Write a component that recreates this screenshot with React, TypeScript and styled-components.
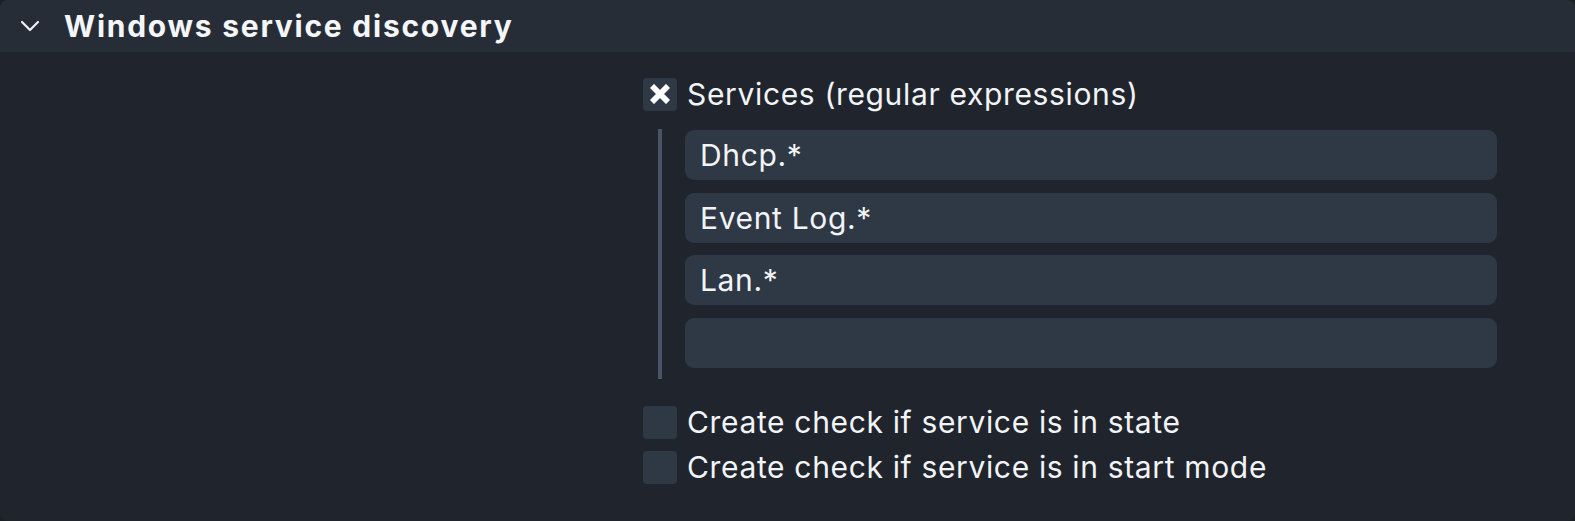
import React from "react";
import styled, { createGlobalStyle } from "styled-components";

const GlobalStyle = createGlobalStyle`
  html, body {
    margin: 0;
    padding: 0;
    background: #1b1f26;
  }
  body {
    font-family: Inter, "Noto Sans", sans-serif;
    color: #f2f4f7;
  }
`;

function Chevron() {
  return (
    <svg width="20" height="12" viewBox="0 0 20 12" fill="none">
      <path d="M2 2l8 8 8-8" stroke="#eef1f5" strokeWidth="2.2" strokeLinecap="round" strokeLinejoin="round" />
    </svg>
  );
}

function Cross() {
  return (
    <svg width="20" height="20" viewBox="0 0 20 20">
      <path d="M4 4l12 12M16 4L4 16" stroke="#ffffff" strokeWidth="5.8" strokeLinecap="square" />
    </svg>
  );
}

const services = ["Dhcp.*", "Event Log.*", "Lan.*", ""];

export default function App() {
  return (
    <>
      <GlobalStyle />
      <Panel>
        <Header>
          <Chevron />
          <Title>Windows service discovery</Title>
        </Header>
        <Body>
          <Form>
            <CheckRow>
              <Box checked>
                <Cross />
              </Box>
              <Label>Services (regular expressions)</Label>
            </CheckRow>
            <ListBlock>
              <Rail />
              <Inputs>
                {services.map((s, i) => (
                  <Field key={i}>{s}</Field>
                ))}
              </Inputs>
            </ListBlock>
            <Options>
              <CheckRow>
                <Box />
                <Label>Create check if service is in state</Label>
              </CheckRow>
              <CheckRow>
                <Box />
                <Label>Create check if service is in start mode</Label>
              </CheckRow>
            </Options>
          </Form>
        </Body>
      </Panel>
    </>
  );
}

const Panel = styled.div`
  width: 1575px;
  height: 521px;
  background: #20252d;
  border-radius: 8px;
  overflow: hidden;
  display: flex;
  flex-direction: column;
`;

const Header = styled.div`
  height: 52px;
  background: #272d37;
  display: flex;
  align-items: center;
  gap: 24px;
  padding-left: 20px;
  box-sizing: border-box;
`;

const Title = styled.div`
  font-size: 30px;
  font-weight: 700;
  letter-spacing: 1.75px;
  color: #f4f6f9;
`;

const Body = styled.div`
  flex: 1;
  padding-left: 643px;
  padding-top: 25px;
`;

const Form = styled.div`
  width: 856px;
  display: flex;
  flex-direction: column;
`;

const CheckRow = styled.div`
  display: flex;
  align-items: center;
  gap: 10px;
  height: 34px;
`;

const Box = styled.div<{ checked?: boolean }>`
  width: 34px;
  height: 33px;
  border-radius: 4px;
  background: #2f3845;
  display: flex;
  align-items: center;
  justify-content: center;
  flex-shrink: 0;
`;

const Label = styled.span`
  font-size: 30px;
  letter-spacing: 0.65px;
  color: #f2f4f7;
`;

const ListBlock = styled.div`
  display: flex;
  margin-top: 18px;
  padding-left: 15px;
`;

const Rail = styled.div`
  width: 4px;
  height: 250px;
  background: #4a5466;
  flex-shrink: 0;
`;

const Inputs = styled.div`
  display: flex;
  flex-direction: column;
  gap: 12.5px;
  margin-left: 23px;
  margin-top: 1px;
  width: 812px;
`;

const Field = styled.div`
  height: 50px;
  border-radius: 9px;
  background: #2f3845;
  display: flex;
  align-items: center;
  padding-left: 15px;
  font-size: 30px;
  letter-spacing: 0.65px;
  color: #f2f4f7;
`;

const Options = styled.div`
  display: flex;
  flex-direction: column;
  gap: 11px;
  margin-top: 26px;
`;
